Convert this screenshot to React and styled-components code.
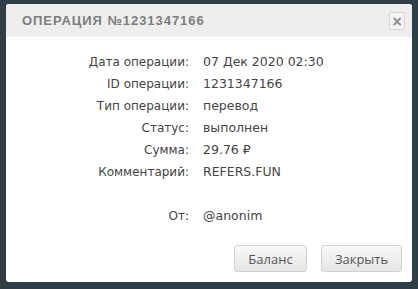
import styled, { createGlobalStyle } from "styled-components";

const GlobalStyle = createGlobalStyle`
    html, body {
        margin: 0;
        padding: 0;
        background: #2f3e45;
    }
`

const Page = styled.div`
    width: 418px;
    height: 289px;
    padding: 4px 6px 0 6px;
    box-sizing: border-box;
`

const Dialog = styled.div`
    width: 406px;
    height: 278px;
    background: #fff;
    border-radius: 3px;
    display: flex;
    flex-direction: column;
    overflow: hidden;
`

const Header = styled.div`
    height: 33px;
    background: #eeeeee;
    display: flex;
    align-items: center;
    justify-content: space-between;
    padding: 0 7px 0 16px;
`

const Title = styled.h1`
    margin: 0;
    font-family: "Liberation Sans", sans-serif;
    font-size: 13px;
    font-weight: bold;
    letter-spacing: 0.95px;
    color: #7d7d7d;
`

const CloseButton = styled.button`
    width: 16px;
    height: 18px;
    padding: 0;
    border: 1px solid #d4d4d4;
    border-radius: 2px;
    background: #f4f4f4;
    color: #8a8a8a;
    font-family: "DejaVu Sans", sans-serif;
    font-size: 14px;
    font-weight: bold;
    line-height: 16px;
    display: flex;
    align-items: center;
    justify-content: center;
`

const Body = styled.div`
    flex: 1;
    padding: 14px 0 0 0;
    display: grid;
    grid-template-columns: 183px 1fr;
    column-gap: 14px;
    grid-auto-rows: 22px;
    align-content: start;
    font-family: "DejaVu Sans", sans-serif;
    font-size: 12.5px;
    color: #444;
`

const Label = styled.div`
    text-align: right;
    line-height: 22px;
    font-size: 12px;
`

const Value = styled.div`
    line-height: 22px;
`

const Footer = styled.div`
    display: flex;
    justify-content: flex-end;
    gap: 14px;
    padding: 0 10px 10px 0;
`

const Button = styled.button`
    height: 27px;
    min-width: ${p => p.$width}px;
    padding: 0 12px;
    border: 1px solid #d2d2d2;
    border-radius: 3px;
    background: linear-gradient(#f7f7f7, #e6e6e6);
    color: #555;
    font-family: "Open Sans", sans-serif;
    font-size: 13px;
`

const rows = [
    ["Дата операции:", "07 Дек 2020 02:30"],
    ["ID операции:", "1231347166"],
    ["Тип операции:", "перевод"],
    ["Статус:", "выполнен"],
    ["Сумма:", "29.76 ₽"],
    ["Комментарий:", "REFERS.FUN"],
    ["", ""],
    ["От:", "@anonim"],
]

const App = () => {
    return (
        <Page>
            <GlobalStyle />
            <Dialog>
                <Header>
                    <Title>ОПЕРАЦИЯ №1231347166</Title>
                    <CloseButton>×</CloseButton>
                </Header>
                <Body>
                    {rows.map(([label, value], i) => [
                        <Label key={"l" + i}>{label}</Label>,
                        <Value key={"v" + i}>{value}</Value>,
                    ])}
                </Body>
                <Footer>
                    <Button $width={73}>Баланс</Button>
                    <Button $width={81}>Закрыть</Button>
                </Footer>
            </Dialog>
        </Page>
    )
};

export default App;
